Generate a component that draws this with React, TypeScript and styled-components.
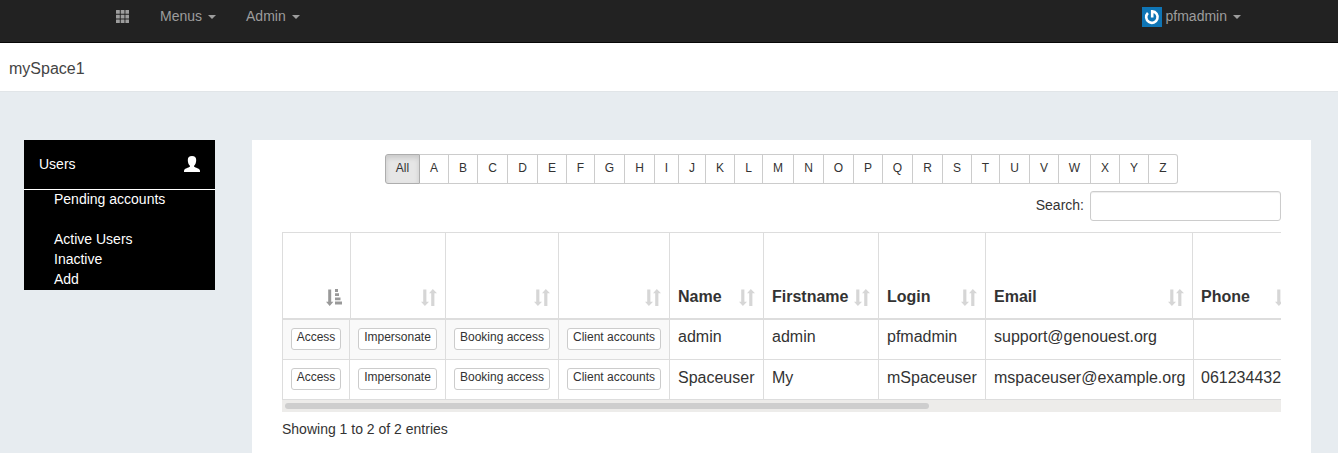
import React from 'react';
import styled, { createGlobalStyle, css } from 'styled-components';

const GlobalStyle = createGlobalStyle`
  *, *::before, *::after { box-sizing: border-box; }
  body {
    margin: 0;
    background: #e7ecf0;
    color: #333;
    font: 14px/20px "Liberation Sans", Arial, Helvetica, sans-serif;
  }
  button, input { font-family: inherit; }
`;

const Page = styled.div`
  height: 453px;
  overflow: hidden;
`;

const Navbar = styled.nav`
  display: flex;
  align-items: flex-start;
  height: 43px;
  padding: 6px 97px 0 116px;
  background: #222;
  border-bottom: 1px solid #080808;
  color: #9d9d9d;
`;

const NavItem = styled.a<{ $gap?: number; $end?: boolean }>`
  display: flex;
  align-items: center;
  height: 20px;
  margin-left: ${(p) => (p.$end ? 'auto' : `${p.$gap ?? 0}px`)};
`;

const Caret = styled.span`
  margin: 2px 0 0 6px;
  border-top: 4px solid currentColor;
  border-left: 4px solid transparent;
  border-right: 4px solid transparent;
`;

const Avatar = styled.svg`
  margin: 2px 4px 0 0;
`;

const SpaceBar = styled.header`
  height: 49px;
  padding: 15px 9px 0;
  background: #fff;
  border-bottom: 1px solid #e1e5e8;
  color: #444;
  font-size: 16px;
  line-height: 22px;
`;

const Content = styled.main`
  display: flex;
  align-items: flex-start;
  gap: 37px;
  padding: 48px 27px 0 24px;
`;

const Sidebar = styled.aside`
  width: 191px;
  height: 150px;
  background: #000;
  color: #fff;
`;

const SidebarHead = styled.div`
  display: flex;
  align-items: center;
  justify-content: space-between;
  height: 50px;
  padding: 0 15px 1px;
  border-bottom: 1px solid #fff;
`;

const SidebarList = styled.ul`
  margin: 0;
  padding: 0 0 0 30px;
  line-height: 18px;
  list-style: none;
`;

const SidebarLink = styled.li<{ $spaced?: boolean }>`
  height: 20px;
  margin-bottom: ${(p) => (p.$spaced ? 20 : 0)}px;
`;

const Panel = styled.section`
  flex: 1;
  min-width: 0;
  height: 330px;
  padding: 14px 30px 0;
  background: #fff;
`;

const LetterGroup = styled.div`
  display: flex;
  width: 793px;
  margin: 0 auto 0 103px;
`;

const LetterButton = styled.button<{ $width: number; $active?: boolean }>`
  width: ${(p) => p.$width}px;
  height: 30px;
  padding: 0 0 2px;
  border: 1px solid #ccc;
  border-left-width: 0;
  background: #fff;
  color: #333;
  font-size: 12px;
  line-height: 18px;
  &:last-child { border-radius: 0 3px 3px 0; }
  ${(p) =>
    p.$active &&
    css`
      border-left-width: 1px;
      border-color: #adadad;
      border-radius: 3px 0 0 3px;
      background: #e6e6e6;
      box-shadow: inset 0 3px 5px rgba(0, 0, 0, 0.125);
    `}
`;

const SearchRow = styled.label`
  display: flex;
  justify-content: flex-end;
  align-items: center;
  gap: 6px;
  margin: 7px 0 11px;
`;

const SearchLabel = styled.span`
  margin-top: -2px;
`;

const SearchInput = styled.input`
  width: 191px;
  height: 30px;
  border: 1px solid #ccc;
  border-radius: 3px;
  background: #fff;
  box-shadow: inset 0 1px 1px rgba(0, 0, 0, 0.075);
`;

const TableFrame = styled.div`
  width: 999px;
  overflow: hidden;
  font-size: 16px;
  line-height: 22px;
`;

const HeadRow = styled.div`
  display: grid;
  grid-template-columns: 68px 95px 113px 111px 94px 115px 107px 207px 107px;
  width: 1018px;
  height: 88px;
  border: solid #ddd;
  border-width: 1px 0 2px 1px;
`;

const HeadCell = styled.div`
  display: flex;
  align-items: flex-end;
  justify-content: space-between;
  padding: 0 8px 10px;
  border-right: 1px solid #ddd;
  font-weight: bold;
`;

const HeadIcon = styled.svg`
  flex: none;
  margin-bottom: 2px;
`;

const BodyRow = styled.div`
  display: grid;
  grid-template-columns: 67px 96px 113px 111px 94px 115px 107px 208px 106px;
  width: 1018px;
  height: 40px;
  border: solid #ddd;
  border-width: 0 0 1px 1px;
`;

const BodyCell = styled.div<{ $shaded?: boolean; $drop?: number }>`
  padding: ${(p) => 6 + (p.$drop ?? 0)}px 0 0 8px;
  border-right: 1px solid #ddd;
  background: ${(p) => (p.$shaded ? '#f9f9f9' : '#fff')};
  white-space: nowrap;
  &:last-child { padding-left: 7px; }
`;

const RowButton = styled.button<{ $width: number }>`
  display: block;
  width: ${(p) => p.$width}px;
  height: 22px;
  padding: 0 0 4px;
  border: 1px solid #ccc;
  border-radius: 3px;
  background: #fff;
  color: #333;
  font-size: 12px;
  line-height: 16px;
  white-space: nowrap;
`;

const ScrollTrack = styled.div`
  height: 12px;
  padding: 3px;
  background: #edecea;
`;

const ScrollThumb = styled.div`
  width: 644px;
  height: 6px;
  border-radius: 3px;
  background: #cecece;
`;

const Summary = styled.p`
  margin: 7px 0 0;
`;

const GridIcon = () => (
  <svg width="13" height="13" viewBox="0 0 13 13" fill="currentColor">
    {[0, 4.7, 9.4].map((y) =>
      [0, 4.7, 9.4].map((x) => <rect key={`${x}-${y}`} x={x} y={y} width="3.8" height="3.8" rx="0.3" />),
    )}
  </svg>
);

const PersonIcon = () => (
  <svg width="16" height="16" viewBox="0 0 16 16" fill="#fff">
    <path d="M8 0C10.8 0 12.2 1.5 12.2 4C12.2 6.5 11.4 8.6 10.1 9.8V10.8C11.5 11.7 15.3 12.6 15.8 14C16 14.6 16 15.3 16 16H0C0 15.3 0 14.6 .2 14C.7 12.6 4.5 11.7 5.9 10.8V9.8C4.6 8.6 3.8 6.5 3.8 4C3.8 1.5 5.2 0 8 0Z" />
  </svg>
);

const SortIcon = () => (
  <HeadIcon width="16" height="17" viewBox="0 0 16 17" fill="#d6d6d6">
    <path d="M2.2 0.5H5.4V12.8H8L3.9 17L0 12.8H2.2ZM10.2 17H13.4V4.2H16L11.8 0L8 4.2H10.2Z" />
  </HeadIcon>
);

const SortedIcon = () => (
  <HeadIcon width="16" height="17" viewBox="0 0 16 17" fill="#999">
    <path d="M2.2 0.5H5.2V12.8H7.4L3.7 17L0 12.8H2.2ZM9 0H12V3H9ZM9 4.3H13V7H9ZM9 8.4H14.5V11.2H9ZM9 12.6H16V15.6H9Z" />
  </HeadIcon>
);

const LETTERS: [string, number][] = [
  ['All', 35], ['A', 29], ['B', 29], ['C', 30], ['D', 30], ['E', 29], ['F', 28], ['G', 30], ['H', 30],
  ['I', 24], ['J', 27], ['K', 29], ['L', 28], ['M', 31], ['N', 30], ['O', 30], ['P', 29], ['Q', 30],
  ['R', 30], ['S', 29], ['T', 28], ['U', 30], ['V', 29], ['W', 32], ['X', 29], ['Y', 29], ['Z', 29],
];

const COLUMNS = ['', '', '', '', 'Name', 'Firstname', 'Login', 'Email', 'Phone'];

const ACTIONS = [
  { label: 'Access', width: 50 },
  { label: 'Impersonate', width: 79 },
  { label: 'Booking access', width: 96 },
  { label: 'Client accounts', width: 94 },
];

const USERS = [
  ['admin', 'admin', 'pfmadmin', 'support@genouest.org', ''],
  ['Spaceuser', 'My', 'mSpaceuser', 'mspaceuser@example.org', '061234432'],
];

export default function App() {
  return (
    <Page>
      <GlobalStyle />
      <Navbar>
        <NavItem><GridIcon /></NavItem>
        <NavItem $gap={31}>Menus<Caret /></NavItem>
        <NavItem $gap={30}>Admin<Caret /></NavItem>
        <NavItem $end>
          <Avatar width="20" height="20" viewBox="0 0 20 20">
            <rect width="20" height="20" fill="#0f75b5" />
            <path d="M10.2 10.4V4.4A5.7 5.7 0 1 1 5.9 6" fill="none" stroke="#fff" strokeWidth="2.6" />
          </Avatar>
          pfmadmin
          <Caret />
        </NavItem>
      </Navbar>
      <SpaceBar>mySpace1</SpaceBar>
      <Content>
        <Sidebar>
          <SidebarHead>Users<PersonIcon /></SidebarHead>
          <SidebarList>
            <SidebarLink $spaced>Pending accounts</SidebarLink>
            <SidebarLink>Active Users</SidebarLink>
            <SidebarLink>Inactive</SidebarLink>
            <SidebarLink>Add</SidebarLink>
          </SidebarList>
        </Sidebar>
        <Panel>
          <LetterGroup>
            {LETTERS.map(([label, width]) => (
              <LetterButton key={label} $width={width} $active={label === 'All'}>{label}</LetterButton>
            ))}
          </LetterGroup>
          <SearchRow>
            <SearchLabel>Search:</SearchLabel>
            <SearchInput />
          </SearchRow>
          <TableFrame>
            <HeadRow>
              {COLUMNS.map((name, i) => (
                <HeadCell key={i}>
                  <span>{name}</span>
                  {i === 0 ? <SortedIcon /> : <SortIcon />}
                </HeadCell>
              ))}
            </HeadRow>
            {USERS.map((user, row) => (
              <BodyRow key={user[0]}>
                {ACTIONS.map((action) => (
                  <BodyCell key={action.label} $shaded={row === 0} $drop={2}>
                    <RowButton $width={action.width}>{action.label}</RowButton>
                  </BodyCell>
                ))}
                {user.map((value, i) => (
                  <BodyCell key={i} $drop={row}>{value}</BodyCell>
                ))}
              </BodyRow>
            ))}
            <ScrollTrack><ScrollThumb /></ScrollTrack>
          </TableFrame>
          <Summary>Showing 1 to 2 of 2 entries</Summary>
        </Panel>
      </Content>
    </Page>
  );
}
